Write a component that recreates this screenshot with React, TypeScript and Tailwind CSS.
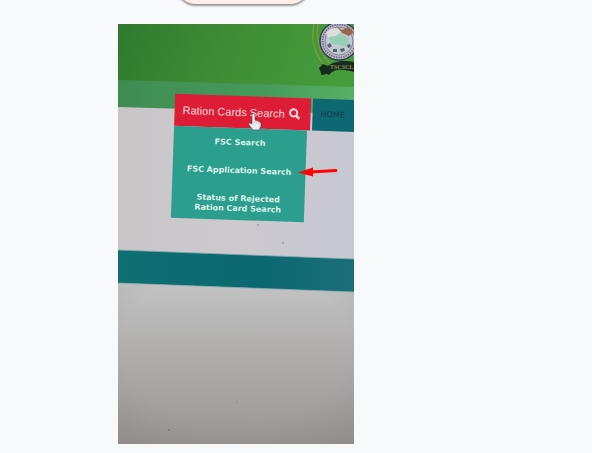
const menuItems = ['FSC Search', 'FSC Application Search', 'Status of Rejected Ration Card Search'];

const Backdrop = () => (
  <svg viewBox="0 0 236 420" className="w-full [grid-area:1/1]" aria-hidden="true">
    <defs>
      <linearGradient id="header" x1="0" y1="0" x2="1" y2="0.1">
        <stop offset="0" stopColor="#307a2f" />
        <stop offset="0.5" stopColor="#408c36" />
        <stop offset="1" stopColor="#449c3a" />
      </linearGradient>
      <linearGradient id="strip" x1="0" y1="0" x2="1" y2="0">
        <stop offset="0" stopColor="#3f8c52" />
        <stop offset="0.6" stopColor="#459a5c" />
        <stop offset="1" stopColor="#57b063" />
      </linearGradient>
      <linearGradient id="page" x1="0" y1="0" x2="1" y2="0.1">
        <stop offset="0" stopColor="#c9c5c7" />
        <stop offset="0.5" stopColor="#cdcace" />
        <stop offset="1" stopColor="#c8c8d2" />
      </linearGradient>
      <linearGradient id="band" x1="0" y1="0" x2="1" y2="0">
        <stop offset="0" stopColor="#0f6f73" />
        <stop offset="0.6" stopColor="#0b6870" />
        <stop offset="1" stopColor="#1b6e7a" />
      </linearGradient>
      <linearGradient id="lower" x1="0" y1="0" x2="0" y2="1">
        <stop offset="0" stopColor="#c4c3c4" />
        <stop offset="0.4" stopColor="#b0afae" />
        <stop offset="1" stopColor="#9a9793" />
      </linearGradient>
      <radialGradient id="shade" cx="0.5" cy="0.4" r="0.8">
        <stop offset="0.6" stopColor="#000" stopOpacity="0" />
        <stop offset="1" stopColor="#000" stopOpacity="0.08" />
      </radialGradient>
    </defs>
    <rect width="236" height="420" fill="url(#page)" />
    <path d="M0 0H236V64L0 57Z" fill="url(#header)" />
    <path d="M0 56L236 63V90L0 83Z" fill="url(#strip)" />
    <path d="M0 226L236 235V268L0 259Z" fill="url(#band)" />
    <path d="M0 259L236 268V420H0Z" fill="url(#lower)" />
    <path d="M0 226L236 235M0 259L236 268" stroke="#7fa9ad" strokeWidth="0.8" />
    <path d="M0 259L236 268V420H0Z" fill="url(#shade)" />
    <circle cx="140" cy="201" r="0.8" fill="#777" />
    <circle cx="165" cy="219" r="0.8" fill="#777" />
    <circle cx="119" cy="378" r="0.7" fill="#888" />
    <circle cx="51" cy="406" r="0.9" fill="#777" />

    {/* emblem */}
    <g fill="none">
      <path d="M196 0C192 18 198 36 211 44M200 0C197 17 203 32 214 41" stroke="#7f9a3c" strokeWidth="1.4" />
      <circle cx="221" cy="17" r="19" fill="#b9b8c6" stroke="#3a3b52" strokeWidth="1.4" />
      <circle cx="221" cy="17" r="16.5" stroke="#686a86" strokeWidth="1.6" strokeDasharray="1.5 1" />
      <circle cx="221" cy="17" r="14" fill="#c2c9cf" stroke="#70748c" strokeWidth="0.8" />
      <path d="M211 12C216 7 225 9 231 15L230 23L222 21L213 20Z" fill="#98cdb9" />
      <path d="M208 9C213 3 218 3 223 7L218 12L210 13Z" fill="#dbdfd9" />
      <path d="M218 1L224 6L230 3L236 8L231 12L224 9Z" fill="#9a6650" />
      <path d="M209 21L212 19L214 22L211 24ZM215 25H219V28H215ZM222 25L226 24L227 27L223 28ZM229 21L232 20L233 23L230 24Z" fill="#536172" />
      <path d="M205 48C211 36 227 36 236 38V48C225 45 216 44 211 51L207 49L203 51L204 47L201 45Z" fill="#172c21" />
      <path d="M201 44L205 40L210 42L208 50L204 51Z" fill="#17291f" />
    </g>
    <text x="212" y="45" fontSize="6" fontWeight="700" fill="#9b8b49" fontFamily="Liberation Serif, serif">TSCSCL</text>
  </svg>
);

const Pointers = () => (
  <svg viewBox="0 0 236 420" className="pointer-events-none z-10 w-full [grid-area:1/1]" aria-hidden="true">
    <path
      d="M134 91C134 89 137 89 137 91V96L139 96.500L141 97.500L143 99V102L141 106H135L131 101C130 99 132 98 134 100Z"
      fill="#e9eded"
      stroke="#52353d"
      strokeWidth="0.6"
      strokeLinejoin="round"
    />
    <path d="M137 97V99M139 97.500V99.500M141 98.500V100" stroke="#727b80" strokeWidth="0.4" />
    <path d="M193 148L218 146.500" stroke="#ff0505" strokeWidth="2.8" strokeLinecap="round" />
    <path d="M180 148.500L195 143.500V152.500Z" fill="#ff0505" />
  </svg>
);

const SearchIcon = () => (
  <svg viewBox="0 0 12 12" className="size-3" fill="none" stroke="currentColor" aria-hidden="true">
    <circle cx="5" cy="5" r="3.600" strokeWidth="2" />
    <path d="M7.800 7.800L10.800 10.800" strokeWidth="2.400" />
  </svg>
);

const App = () => {
  return (
    <main className="min-h-screen overflow-hidden bg-[#f7f9fb] pb-2">
      <div className="flex h-6 items-start pl-44">
        <button
          type="button"
          aria-label="Open"
          className="-mt-9 h-10 w-[134px] shrink-0 rounded-full bg-[#ffedea] shadow-[0_1px_2px_1px_#999999]"
        />
      </div>

      <figure className="ml-[20%] grid w-2/5 max-w-[236px] overflow-hidden">
        <Backdrop />

        <div className="min-w-0 pt-[73px] pl-[55px] [grid-area:1/1]">
          <nav className="flex w-max rotate-[2deg] items-start gap-0.5 font-['DejaVu_Sans',sans-serif]">
            <div>
              <button
                type="button"
                className="flex h-8 w-[136px] items-center gap-1 bg-[#df1c35] pl-2 font-['Liberation_Sans',sans-serif] text-[11px] whitespace-nowrap text-[#f8dcdd]"
              >
                Ration Cards Search
                <SearchIcon />
              </button>
              <ul className="flex h-[92px] w-[133px] flex-col items-center justify-between bg-[#2b9e8d] pt-2.5 pb-1.5 text-center text-[8px] leading-[10px] font-bold text-[#daf1e8]">
                {menuItems.map((item) => (
                  <li key={item} className="max-w-[112px]">
                    <a href="#">{item}</a>
                  </li>
                ))}
              </ul>
            </div>
            <a href="#" className="flex h-8 w-12 items-center bg-[#0d6873] pl-2 text-[8px] text-[#103943]">
              HOME
            </a>
          </nav>
        </div>

        <Pointers />
      </figure>
    </main>
  );
};

export default App;
